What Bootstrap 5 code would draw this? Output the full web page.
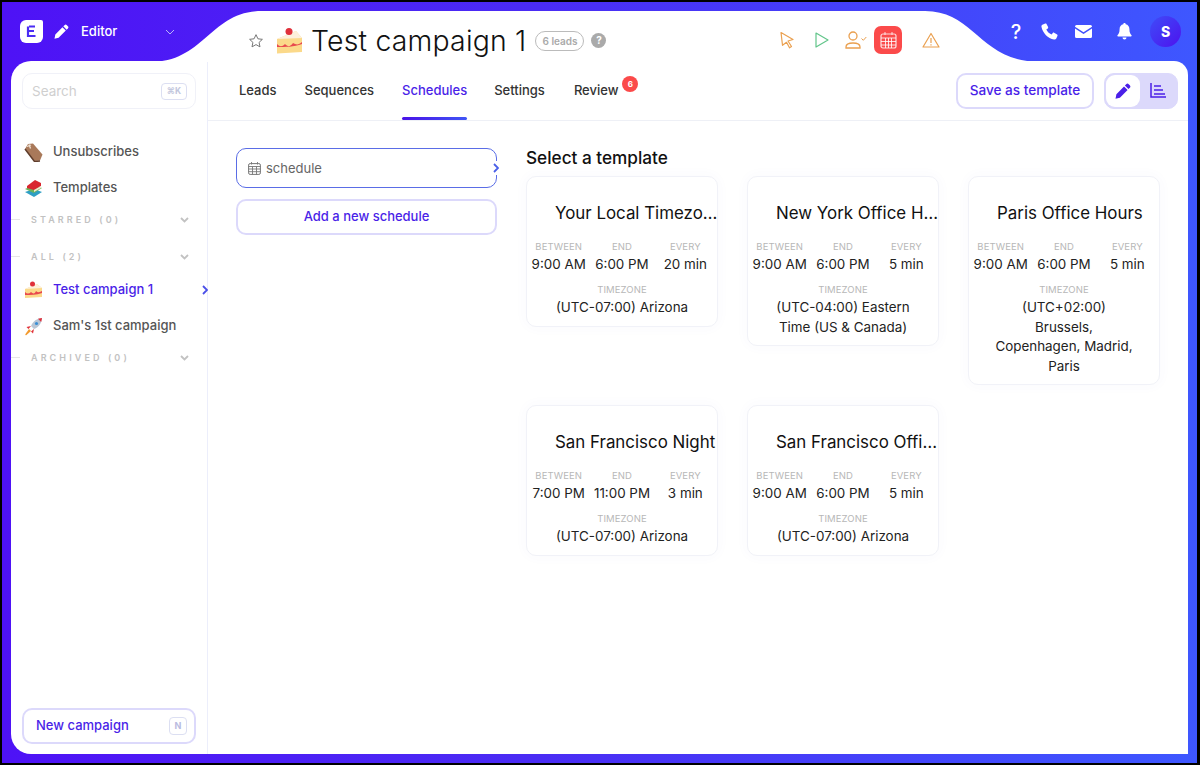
<!DOCTYPE html>
<html lang="en">
<head>
  <meta charset="UTF-8" />
  <title>Test campaign 1 - Schedules</title>
  <link href="https://cdn.jsdelivr.net/npm/bootstrap@5.3.3/dist/css/bootstrap.min.css" rel="stylesheet" />
  <style>
    html, body { height: 100%; }
    body {
      background: #000;
      padding: 2px 3px 2px 2px;
      overflow: hidden;
      font-family: Inter, "Liberation Sans", sans-serif;
      font-size: 13px;
      color: #222;
    }
    .app {
      height: 100%;
      background: linear-gradient(to right, #4e12f6, #4a2cf4 45%, #3e57ff);
    }
    .top-bar { height: 59px; flex: none; }
    .top-shape { position: absolute; left: -2px; top: -2px; width: 1197px; height: 62px; }
    .top-bar > div { position: relative; }
    .brand { width: 246px; padding-left: 18px; height: 59px; color: #fff; }
    .brand .logo { width: 23px; height: 23px; margin-right: 11px; }
    .brand .name { margin-left: 12px; font-size: 13px; font-weight: 500; width: 84px; }
    .campaign { padding-top: 18px; height: 59px; }
    .campaign h1 { font-size: 28.4px; font-weight: 300; margin: 0 9px 0 8px; color: #111; letter-spacing: .2px; position: relative; top: 1px; }
    .leads-pill {
      border: 1px solid #bbb; border-radius: 10px; color: #aaa; font-size: 10px; font-weight: 600;
      width: 49px; height: 20px; line-height: 18px; text-align: center; white-space: nowrap;
    }
    .help-dot {
      width: 15px; height: 15px; border-radius: 50%; background: #aaa; color: #fff;
      font-size: 10px; font-weight: 700; line-height: 15px; text-align: center; margin-left: 7px;
    }
    .status { padding-top: 16px; height: 59px; margin-left: auto; }
    .status-red { width: 28px; height: 28px; border-radius: 7px; background: #fb4a4a; }
    .account { height: 59px; margin-left: 68px; padding-right: 16px; color: #fff; }
    .account .q { font-size: 20px; font-weight: 500; width: 16px; text-align: center; margin-right: 17px; }
    .avatar {
      width: 31px; height: 31px; border-radius: 50%; background: linear-gradient(135deg, #3f4cf8, #4d12ee);
      color: #fff; font-weight: 800; font-size: 14px; line-height: 31px; text-align: center; margin-left: 18px;
    }
    .panel { margin: 0 9px 9px; background: #fff; border-radius: 20px 14px 0 20px; min-height: 0; }
    .side { width: 197px; flex: none; border-right: 1px solid #eceefb; padding: 12px 0 10px; }
    .search {
      margin: 0 11px; height: 36px; border: 1px solid #f0f1f8; border-radius: 10px;
      padding: 0 8px 0 9px; color: #cfcfcf; font-size: 13.5px;
    }
    .kbd {
      border: 1.5px solid #dcdff2; border-radius: 4px; color: #c2c6dc; font-size: 8.5px; font-weight: 700;
      height: 17px; line-height: 14px; text-align: center; padding: 0 5px;
    }
    .side-list { margin-top: 25px; }
    .side-item { height: 36px; padding-left: 13px; font-size: 13px; font-weight: 500; color: #555; position: relative; }
    .side-item svg { width: 19px; height: 19px; margin-right: 10px; flex: none; }
    .side-item.on { color: #4a1fe8; }
    .side-item .tick { position: absolute; right: -1px; top: 13px; width: 6px; height: 10px; margin: 0; }
    .side-head {
      height: 28px; position: relative; padding: 0 18px 0 20px;
      font-size: 9px; font-weight: 600; letter-spacing: 3.1px; color: #c2c2c2;
    }
    .side-head::before { content: ""; position: absolute; left: 0; top: 13px; width: 9px; height: 1px; background: #e6e6e6; }
    .side-head.starred { margin-bottom: 9px; }
    .side-head.all { margin-bottom: 1px; }
    .side-head svg { width: 9px; height: 6px; }
    .btn-soft {
      border: 2px solid #dcd9fb; border-radius: 10px; background: #fff; color: #4a1fe8;
      font-size: 13px; font-weight: 500; height: 36px;
    }
    .new-camp { margin: auto 11px 0; padding: 0 7px 0 12px; }
    .new-camp .kbd { color: #b9bbe0; width: 18px; height: 18px; padding: 0; line-height: 15px; font-size: 9px; }
    .tabs-row { height: 60px; border-bottom: 1px solid #eef0f6; padding: 0 10px 0 31px; flex: none; }
    .tab-link {
      color: #333; font-size: 13px; font-weight: 500; height: 59px; line-height: 59px; margin-right: 28px;
      position: relative; display: block; text-decoration: none; padding: 0;
    }
    .tab-link.active { color: #4a1fe8; }
    .tab-link.active::after {
      content: ""; position: absolute; left: 0; right: 0; bottom: 0; height: 3px; border-radius: 2px;
      background: linear-gradient(to right, #4a12e8, #3f55f5);
    }
    .tab-badge {
      position: absolute; top: 15px; right: -20px; width: 16px; height: 16px; border-radius: 50%;
      background: #fb4a4a; color: #fff; font-size: 8px; font-weight: 700; line-height: 16px; text-align: center;
    }
    .tab-link.last { margin-left: 1px; }
    .tab-link.settings { margin-left: -1px; }
    .save-btn { width: 138px; font-size: 13.6px; }
    .mode {
      width: 74px; height: 36px; margin-left: 10px; background: #dcd9fb; border-radius: 10px; padding: 1px;
      border: 1px solid #dcd9fb;
    }
    .mode span { height: 100%; width: 34px; }
    .mode .cur { background: #fff; border-radius: 9px; }
    .body-row { padding: 27px 28px 0 28px; }
    .sched-col { width: 261px; flex: none; margin-right: 29px; }
    .sched-item {
      height: 40px; border: 1.5px solid #5a6de6; border-radius: 10px; padding: 1px 11px 0; color: #666;
      font-size: 13px; position: relative; margin-bottom: 11px;
    }
    .sched-item svg.cal { width: 13px; height: 13px; margin-right: 5px; }
    .sched-item .notch {
      position: absolute; right: -5px; top: 12px; width: 10px; height: 14px; background: #fff;
    }
    .sched-item .notch svg { position: absolute; left: 2px; top: 2px; width: 6px; height: 10px; }
    .add-btn { width: 100%; }
    .tpl-title { font-size: 17.2px; font-weight: 500; color: #111; height: 28px; line-height: 19px; }
    .tpl-grid {
      display: grid; grid-template-columns: repeat(3, 192px); column-gap: 29px; row-gap: 20px; align-items: start;
    }
    .tpl-card {
      border: 1px solid #f1f2f8; border-radius: 10px; background: #fff; text-align: center;
      box-shadow: 0 0 14px rgba(90, 90, 200, .035); padding-bottom: 8px;
    }
    .tpl-name {
      font-size: 16.9px; font-weight: 400; color: #111; text-align: left; padding: 26px 0 0 28px; line-height: 20px;
      margin-bottom: 18px; white-space: nowrap;
    }
    .tpl-cols { display: grid; grid-template-columns: repeat(3, 1fr); }
    .lbl { font-size: 9.5px; color: #b7b7b7; line-height: 11px; letter-spacing: .1px; }
    .val { font-size: 13.4px; color: #222; line-height: 20px; white-space: nowrap; margin-top: 2px; }
    .tz { padding: 0 25px; margin-top: 10px; }
    .tz .val { white-space: normal; line-height: 19.6px; margin-top: 3px; }
  </style>
</head>
<body>
  <div class="app d-flex flex-column">
    <header class="top-bar d-flex position-relative">
      <svg class="top-shape" viewBox="0 0 1197 62" preserveAspectRatio="none">
        <path d="M150 62C205 62 210 11 262 11H925C975 11 980 62 1040 62Z" fill="#fff"/>
      </svg>
      <div class="brand d-flex align-items-center">
        <svg class="logo" viewBox="0 0 23 23"><path d="M6 0h15a2 2 0 0 1 2 2v15a6 6 0 0 1-6 6H6a6 6 0 0 1-6-6V6a6 6 0 0 1 6-6z" fill="#fff"/><path d="M8 6.500v9.500h7.500M8 11h6M9 6.500h6" fill="none" stroke="#4a2cf4" stroke-width="2.200"/></svg>
        <svg width="15" height="15" viewBox="0 0 16 16"><path d="M11.200 1.200a1.800 1.800 0 0 1 2.500 0l1.100 1.100a1.800 1.800 0 0 1 0 2.500l-1.300 1.300-3.600-3.600zM9 3.400l3.600 3.600-7.700 7.700-4.400 1 .9-4.500z" fill="#fff"/></svg>
        <div class="name">Editor</div>
        <svg width="10" height="6" viewBox="0 0 10 6"><path d="M1 1l4 4 4-4" fill="none" stroke="#b9b3fa" stroke-width="1"/></svg>
      </div>
      <div class="campaign d-flex align-items-center">
        <svg width="16" height="16" viewBox="0 0 24 24" class="me-2"><path d="M12 2.500l2.900 6.200 6.700.8-5 4.600 1.400 6.700-6-3.400-6 3.400 1.400-6.700-5-4.600 6.700-.8z" fill="none" stroke="#777" stroke-width="1.500" stroke-linejoin="round"/></svg>
        <svg width="27" height="27" viewBox="0 0 27 27" class="ms-1"><path d="M1 12l19-8 6 7v14l-25 1.500z" fill="#fbd98a"/><path d="M1 12l19-8 6 7z" fill="#fdf0dc"/><path d="M1 17c3 3 5 3 8 0 3 3 5 3 8-1 3 2 6 2 9-1v2c-8 3-17 3-25 3z" fill="#e8484e"/><circle cx="13" cy="4.500" r="3.500" fill="#e0303a"/></svg>
        <h1>Test campaign 1</h1>
        <div class="leads-pill">6 leads</div>
        <div class="help-dot">?</div>
      </div>
      <div class="status d-flex align-items-center">
        <svg width="16" height="18" viewBox="0 0 16 18" style="margin-right:17px"><path d="M2 1.500l12 7-5 1.500 3.500 5.500-2 1.300-3-5.500-4 3z" fill="none" stroke="#eaa050" stroke-width="1.200" stroke-linejoin="round"/></svg>
        <svg width="14" height="16" viewBox="0 0 14 16" style="margin:0 16px 0 3px"><path d="M1 1l12 7-12 7z" fill="none" stroke="#62c58a" stroke-width="1.200" stroke-linejoin="round"/></svg>
        <svg width="22" height="18" viewBox="0 0 22 18" style="margin-right:7px"><circle cx="8" cy="5" r="4" fill="none" stroke="#eaa050" stroke-width="1.300"/><path d="M1 17v-1c0-2.500 3-4 7-4s7 1.500 7 4v1z" fill="none" stroke="#eaa050" stroke-width="1.300"/><path d="M16.500 7.500l1.800 1.800 3-3.300" fill="none" stroke="#eaa050" stroke-width="1"/></svg>
        <div class="status-red d-flex align-items-center justify-content-center">
          <svg width="17" height="18" viewBox="0 0 17 18"><rect x="1" y="3" width="15" height="14" rx="2" fill="none" stroke="#fff" stroke-opacity=".8" stroke-width="1.200"/><path d="M1 7h15M1 10.500h15M1 14h15M5.500 7v10M8.500 7v10M11.500 7v10M5 1v3M12 1v3" stroke="#fff" stroke-opacity=".8" stroke-width="1"/></svg>
        </div>
        <svg width="18" height="16" viewBox="0 0 18 16" style="margin-left:20px"><path d="M9 1.500l8 13.500H1z" fill="none" stroke="#eaa050" stroke-width="1.200" stroke-linejoin="round"/><path d="M9 6v5M9 12.200v1.200" stroke="#eaa050" stroke-width="1.200"/></svg>
      </div>
      <div class="account d-flex align-items-center">
        <div class="q">?</div>
        <svg width="17" height="17" viewBox="0 0 17 17" style="margin-right:17px"><path d="M4.200.500L1.400 1.800C.600 2.200.300 3 .500 4c1.200 6 6.500 11.500 12.500 12.500 1 .200 1.800-.100 2.300-1l1.200-2.700c.200-.500 0-1-.400-1.300l-3-1.800c-.500-.300-1-.200-1.300.200l-1.200 1.500C8 10.500 6.400 8.900 5.300 6.600l1.500-1.200c.400-.300.500-.800.300-1.300L5.500.900C5.200.400 4.700.300 4.200.500z" fill="#fff"/></svg>
        <svg width="17" height="13" viewBox="0 0 17 13" style="margin-right:25px"><path d="M1.500 0h14A1.500 1.500 0 0 1 17 1.500v.3L8.500 7.300 0 1.800v-.3A1.500 1.500 0 0 1 1.500 0z" fill="#fff"/><path d="M0 3.600l8.500 5.500L17 3.600v7.900a1.500 1.500 0 0 1-1.500 1.500h-14A1.500 1.500 0 0 1 0 11.500z" fill="#fff"/></svg>
        <svg width="15" height="17" viewBox="0 0 15 17"><path d="M7.500 0c.7 0 1.200.5 1.200 1.200 2.300.5 3.700 2.400 3.700 4.800 0 3.800 1 5 2.100 6.300.4.500.1 1.200-.6 1.200H1.100c-.7 0-1-.7-.6-1.200C1.600 11 2.600 9.800 2.600 6c0-2.400 1.400-4.300 3.700-4.800C6.300.5 6.800 0 7.500 0zM5.500 14.500h4a2 2 0 0 1-4 0z" fill="#fff"/></svg>
        <div class="avatar">S</div>
      </div>
    </header>

    <main class="panel flex-grow-1 d-flex">
      <aside class="side d-flex flex-column">
        <div class="search d-flex align-items-center justify-content-between">
          <span>Search</span><span class="kbd">⌘K</span>
        </div>
        <div class="side-list">
          <div class="side-item d-flex align-items-center">
            <svg viewBox="0 0 19 19"><path d="M4 1l5-.5 9.500 11-2.500 6-5.500.5L1 6z" fill="#a9795a"/><path d="M3 3.500l4-1.500M5 1.500l1.500 4" stroke="#efe2d4" stroke-width="1.300" fill="none"/><path d="M1 6l9.500 12.500 5.500-.5" fill="none" stroke="#5f3d2b" stroke-width="1.500"/></svg>
            Unsubscribes
          </div>
          <div class="side-item d-flex align-items-center">
            <svg viewBox="0 0 19 19"><path d="M1 13l9-3 8 3-8 5z" fill="#2f9fc4"/><path d="M1 10l9-4 8 3-8 5z" fill="#6db35a"/><path d="M3 7l8-6 6 3v3l-7 4-7-2z" fill="#d9262f"/><path d="M10 11l7-4v2l-7 4z" fill="#f3e6d0"/></svg>
            Templates
          </div>
          <div class="side-head starred d-flex align-items-center justify-content-between"><span>STARRED (0)</span><svg viewBox="0 0 9 6"><path d="M1 1l3.500 3.500L8 1" fill="none" stroke="#c2c2c2" stroke-width="1.800"/></svg></div>
          <div class="side-head all d-flex align-items-center justify-content-between"><span>ALL (2)</span><svg viewBox="0 0 9 6"><path d="M1 1l3.500 3.500L8 1" fill="none" stroke="#c2c2c2" stroke-width="1.800"/></svg></div>
          <div class="side-item on d-flex align-items-center">
            <svg viewBox="0 0 19 19"><path d="M1 8l12-5 5 4v9l-17 1z" fill="#fbd98a"/><path d="M1 8l12-5 5 4z" fill="#fdf0dc"/><path d="M1 11c2 2 4 2 6 0 2 2 4 2 5-1 2 2 4 1 6 0v2c-6 2-11 2-17 2z" fill="#e8484e"/><circle cx="8.500" cy="3" r="2.500" fill="#e0303a"/></svg>
            Test campaign 1
            <svg class="tick" viewBox="0 0 6 10"><path d="M1 1l4 4-4 4" fill="none" stroke="#4a4fe8" stroke-width="1.800"/></svg>
          </div>
          <div class="side-item d-flex align-items-center">
            <svg viewBox="0 0 19 19"><path d="M18 1c-5 .5-9 3-11 8l3 3c5-2 7.500-6 8-11z" fill="#b9c6d4"/><path d="M18 1l-4 .8L17.200 5z" fill="#e0303a"/><path d="M7 9l-4.500 1 2 2zM10 12l-1 4.500-2-2z" fill="#e0303a"/><path d="M5 12l2 2-4.500 4c-1 .5-1.500 0-1-1z" fill="#f39a2e"/><circle cx="12.500" cy="6.500" r="1.600" fill="#3b8fd6"/></svg>
            Sam's 1st campaign
          </div>
          <div class="side-head d-flex align-items-center justify-content-between"><span>ARCHIVED (0)</span><svg viewBox="0 0 9 6"><path d="M1 1l3.500 3.500L8 1" fill="none" stroke="#c2c2c2" stroke-width="1.800"/></svg></div>
        </div>
        <button class="btn-soft new-camp d-flex align-items-center justify-content-between" type="button">
          <span>New campaign</span><span class="kbd">N</span>
        </button>
      </aside>

      <section class="flex-grow-1 d-flex flex-column" style="min-width:0">
        <div class="tabs-row d-flex align-items-center">
          <nav class="nav flex-grow-1">
            <a class="tab-link" href="#">Leads</a>
            <a class="tab-link" href="#">Sequences</a>
            <a class="tab-link active" href="#">Schedules</a>
            <a class="tab-link settings" href="#">Settings</a>
            <a class="tab-link last" href="#">Review<span class="tab-badge">6</span></a>
          </nav>
          <button class="btn-soft save-btn" type="button">Save as template</button>
          <div class="mode d-flex">
            <span class="cur d-flex align-items-center justify-content-center"><svg width="16" height="16" viewBox="0 0 16 16"><path d="M11.200 1.200a1.800 1.800 0 0 1 2.500 0l1.100 1.100a1.800 1.800 0 0 1 0 2.500l-1.300 1.300-3.600-3.600zM9 3.400l3.600 3.600-7.700 7.700-4.400 1 .9-4.500z" fill="#4a1fe8"/></svg></span>
            <span class="flex-grow-1 d-flex align-items-center justify-content-center"><svg width="16" height="15" viewBox="0 0 16 15"><path d="M1 0v14h15M4 3h7M4 7h9M4 11h11" fill="none" stroke="#4a1fe8" stroke-width="1.500"/></svg></span>
          </div>
        </div>
        <div class="body-row d-flex">
          <div class="sched-col">
            <div class="sched-item d-flex align-items-center">
              <svg class="cal" viewBox="0 0 13 13"><rect x=".6" y="1.600" width="11.800" height="10.800" rx="1.500" fill="none" stroke="#777" stroke-width="1"/><path d="M.6 4.500h11.800M.6 7h11.800M.6 9.700h11.800M4.500 4.500v8M8.500 4.500v8M3.500 0v2.500M9.500 0v2.500" stroke="#777" stroke-width=".9"/></svg>
              schedule
              <span class="notch"><svg viewBox="0 0 6 10"><path d="M1 1l4 4-4 4" fill="none" stroke="#4a5fe8" stroke-width="1.800"/></svg></span>
            </div>
            <button class="btn-soft add-btn" type="button">Add a new schedule</button>
          </div>
          <div>
            <div class="tpl-title">Select a template</div>
            <div class="tpl-grid" id="tplGrid"></div>
          </div>
        </div>
      </section>
    </main>
  </div>

  <script src="https://cdn.jsdelivr.net/npm/bootstrap@5.3.3/dist/js/bootstrap.bundle.min.js"></script>
  <script>
    const templates = [
      ["Your Local Timezo…", "9:00 AM", "6:00 PM", "20 min", "(UTC-07:00) Arizona"],
      ["New York Office H…", "9:00 AM", "6:00 PM", "5 min", "(UTC-04:00) Eastern Time (US & Canada)"],
      ["Paris Office Hours", "9:00 AM", "6:00 PM", "5 min", "(UTC+02:00) Brussels, Copenhagen, Madrid, Paris"],
      ["San Francisco Night", "7:00 PM", "11:00 PM", "3 min", "(UTC-07:00) Arizona"],
      ["San Francisco Offi…", "9:00 AM", "6:00 PM", "5 min", "(UTC-07:00) Arizona"]
    ];
    document.getElementById("tplGrid").innerHTML = templates.map(t => `
      <div class="tpl-card">
        <div class="tpl-name">${t[0]}</div>
        <div class="tpl-cols">
          <div><div class="lbl">BETWEEN</div><div class="val">${t[1]}</div></div>
          <div><div class="lbl">END</div><div class="val">${t[2]}</div></div>
          <div><div class="lbl">EVERY</div><div class="val">${t[3]}</div></div>
        </div>
        <div class="tz"><div class="lbl">TIMEZONE</div><div class="val">${t[4].replace("&", "&amp;")}</div></div>
      </div>`).join("");
  </script>
</body>
</html>
